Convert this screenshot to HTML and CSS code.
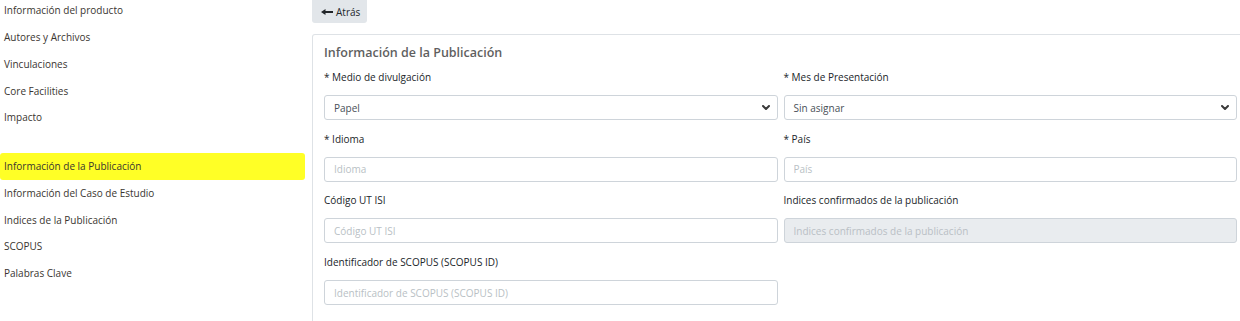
FILE: index.html
```html
<!DOCTYPE html>
<html lang="es">
<head>
<meta charset="utf-8">
<link rel="stylesheet" href="styles.css">
</head>
<body>
<div class="layout">
  <nav class="sidebar">
    <ul class="nav-group">
      <li class="nav-item">Información del producto</li>
      <li class="nav-item">Autores y Archivos</li>
      <li class="nav-item">Vinculaciones</li>
      <li class="nav-item">Core Facilities</li>
      <li class="nav-item">Impacto</li>
    </ul>
    <ul class="nav-group second">
      <li class="nav-item active">Información de la Publicación</li>
      <li class="nav-item">Información del Caso de Estudio</li>
      <li class="nav-item">Indices de la Publicación</li>
      <li class="nav-item">SCOPUS</li>
      <li class="nav-item">Palabras Clave</li>
    </ul>
  </nav>
  <main class="main">
    <button class="btn-back" type="button"><svg class="arrow" viewBox="0 0 12 6" width="12" height="6"><path d="M0 3L4.5 0V2.1H12V3.9H4.5V6Z" fill="#212529"/></svg><span>Atrás</span></button>
    <section class="card">
      <h2 class="card-title">Información de la Publicación</h2>
      <div class="form-grid">
        <div class="field">
          <label class="label">* Medio de divulgación</label>
          <div class="select">
            <span>Papel</span>
            <svg class="chev" viewBox="0 0 8 5" width="8" height="5"><path d="M1 1l3 3 3-3" fill="none" stroke="#3a3a3a" stroke-width="2" stroke-linecap="round" stroke-linejoin="round"/></svg>
          </div>
        </div>
        <div class="field">
          <label class="label">* Mes de Presentación</label>
          <div class="select">
            <span>Sin asignar</span>
            <svg class="chev" viewBox="0 0 8 5" width="8" height="5"><path d="M1 1l3 3 3-3" fill="none" stroke="#3a3a3a" stroke-width="2" stroke-linecap="round" stroke-linejoin="round"/></svg>
          </div>
        </div>
        <div class="field">
          <label class="label">* Idioma</label>
          <input class="input" placeholder="Idioma">
        </div>
        <div class="field">
          <label class="label">* País</label>
          <input class="input" placeholder="País">
        </div>
        <div class="field">
          <label class="label">Código UT ISI</label>
          <input class="input" placeholder="Código UT ISI">
        </div>
        <div class="field">
          <label class="label">Indices confirmados de la publicación</label>
          <input class="input" placeholder="Indices confirmados de la publicación" disabled>
        </div>
        <div class="field">
          <label class="label">Identificador de SCOPUS (SCOPUS ID)</label>
          <input class="input" placeholder="Identificador de SCOPUS (SCOPUS ID)">
        </div>
      </div>
    </section>
  </main>
</div>
</body>
</html>
```

FILE: styles.css
```css
* { box-sizing: border-box; }
html, body { margin: 0; padding: 0; background: #fff; overflow: hidden; }
body {
  font-family: "Open Sans", "Noto Sans", sans-serif;
  font-size: 10px;
  color: #212529;
  width: 1240px;
  height: 321px;
}
.layout {
  display: grid;
  grid-template-columns: 312px 1fr;
  height: 100%;
}
.sidebar {
  padding-right: 7px;
  margin-top: -3px;
}
.nav-group { list-style: none; margin: 0; padding: 0; }
.nav-group.second { margin-top: 22px; }
.nav-item {
  height: 26.75px;
  display: flex;
  align-items: center;
  padding-left: 4px;
  color: #3a3530;
  border-radius: 3px;
}
.nav-item.active { background: #ffff26; }
.main {
  min-width: 0;
  display: flex;
  flex-direction: column;
  align-items: flex-start;
  height: 321px;
}
.btn-back {
  font-family: inherit;
  font-size: 10px;
  color: #212529;
  background: #e2e6ea;
  border: none;
  border-radius: 3px;
  height: 27px;
  margin-top: -4px;
  padding: 4px 0 0 9px;
  width: 55px;
  display: flex;
  align-items: center;
  gap: 3px;
  flex: none;
}
.btn-back .arrow { display: block; }
.card {
  margin-top: 11px;
  width: calc(100% + 9px);
  flex: 1;
  border: 1px solid #dee2e6;
  border-bottom: none;
  border-radius: 3px 3px 0 0;
  padding: 9px 11px 0 11px;
}
.card-title {
  margin: 0 0 8px;
  font-size: 12.5px;
  line-height: 18px;
  font-weight: 600;
  color: #5f5f5f;
}
.form-grid {
  display: grid;
  grid-template-columns: 1fr 1fr;
  column-gap: 6px;
  row-gap: 11.7px;
}
.field { display: flex; flex-direction: column; }
.label {
  line-height: 14px;
  height: 14px;
  margin-bottom: 11px;
  font-weight: 500;
  color: #212529;
}
.select, .input {
  height: 25px;
  border: 1px solid #ced4da;
  border-radius: 3px;
  font-family: inherit;
  font-size: 10px;
  padding: 0 9px;
  background: #fff;
  width: 100%;
}
.select {
  display: flex;
  align-items: center;
  justify-content: space-between;
  color: #495057;
  padding-right: 7px;
}
.chev { display: block; }
.input { color: #495057; outline: none; }
.input::placeholder { color: #b9bfc5; }
.input:disabled { background: #e9ecef; }
```
